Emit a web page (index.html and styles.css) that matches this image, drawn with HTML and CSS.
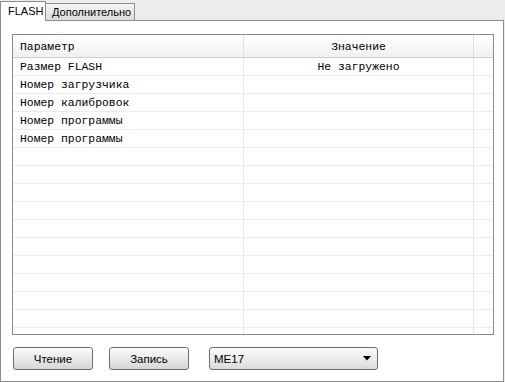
FILE: index.html
```html
<!DOCTYPE html>
<html>
<head>
<meta charset="utf-8">
<title>FLASH</title>
<link rel="stylesheet" href="styles.css">
</head>
<body>
<div class="tabs">
  <div class="tab active">FLASH</div>
  <div class="tab">Дополнительно</div>
</div>
<div class="panel">
  <div class="grid">
    <div class="row head">
      <div class="cell c1">Параметр</div>
      <div class="cell c2">Значение</div>
      <div class="cell c3"></div>
    </div>
    <div class="row"><div class="cell c1">Размер FLASH</div><div class="cell c2">Не загружено</div><div class="cell c3"></div></div>
    <div class="row"><div class="cell c1">Номер загрузчика</div><div class="cell c2"></div><div class="cell c3"></div></div>
    <div class="row"><div class="cell c1">Номер калибровок</div><div class="cell c2"></div><div class="cell c3"></div></div>
    <div class="row"><div class="cell c1">Номер программы</div><div class="cell c2"></div><div class="cell c3"></div></div>
    <div class="row"><div class="cell c1">Номер программы</div><div class="cell c2"></div><div class="cell c3"></div></div>
    <div class="row"><div class="cell c1"></div><div class="cell c2"></div><div class="cell c3"></div></div>
    <div class="row"><div class="cell c1"></div><div class="cell c2"></div><div class="cell c3"></div></div>
    <div class="row"><div class="cell c1"></div><div class="cell c2"></div><div class="cell c3"></div></div>
    <div class="row"><div class="cell c1"></div><div class="cell c2"></div><div class="cell c3"></div></div>
    <div class="row"><div class="cell c1"></div><div class="cell c2"></div><div class="cell c3"></div></div>
    <div class="row"><div class="cell c1"></div><div class="cell c2"></div><div class="cell c3"></div></div>
    <div class="row"><div class="cell c1"></div><div class="cell c2"></div><div class="cell c3"></div></div>
    <div class="row"><div class="cell c1"></div><div class="cell c2"></div><div class="cell c3"></div></div>
    <div class="row"><div class="cell c1"></div><div class="cell c2"></div><div class="cell c3"></div></div>
    <div class="row"><div class="cell c1"></div><div class="cell c2"></div><div class="cell c3"></div></div>
    <div class="row"><div class="cell c1"></div><div class="cell c2"></div><div class="cell c3"></div></div>
  </div>
  <div class="controls">
    <button class="btn">Чтение</button>
    <button class="btn">Запись</button>
    <div class="select">
      <span>ME17</span>
      <svg width="8" height="5" viewBox="0 0 8 5"><path d="M0 0H8L4 4.5Z" fill="#000"/></svg>
    </div>
  </div>
</div>
</body>
</html>
```

FILE: styles.css
```css
* {box-sizing: border-box}

body {
 margin: 0;
 background: #ececec;
 font-family: "Liberation Sans", Tahoma, sans-serif;
 font-size: 11px;
 width: 505px;
 height: 382px;
 overflow: hidden;
}

.tabs {
 display: flex;
 align-items: flex-end;
 height: 20px;
 padding-top: 1px;
}

.tab {
 height: 17px;
 width: 90px;
 padding: 2px 0 0 6px;
 border: 1px solid #8c8c8c;
 border-bottom: none;
 background: linear-gradient(#f4f4f4, #dcdcdc);
 color: #000;
 margin-left: -1px;
 font-size: 11px;
}

.tab.active {
 height: 20px;
 width: 46px;
 padding: 3px 0 0 7px;
 margin-left: 0;
 margin-bottom: -1px;
 background: #fff;
 position: relative;
 z-index: 1;
}

.panel {
 background: #fff;
 border: 1px solid #8c8c8c;
 height: 362px;
 width: 504px;
 padding: 13px 0 0 11px;
}

.grid {
 width: 482px;
 height: 301px;
 border: 1px solid #8a8a8a;
 overflow: hidden;
 font-family: "Liberation Mono", "Courier New", monospace;
 font-size: 11.4px;
 color: #000;
}

.row {
 display: flex;
 height: 18px;
 border-bottom: 1px solid #ececec;
}

.row.head {
 height: 23px;
 background: linear-gradient(#fff, #f0f0f0);
 border-bottom: 1px solid #cfcfcf;
}

.cell {
 border-right: 1px solid #e8e8e8;
 line-height: 19px;
 white-space: nowrap;
}

.head .cell {
 line-height: 24px;
 border-right-color: #e0e0e0;
}

.c1 {
 width: 231px;
 padding-left: 7px;
}

.c2 {
 width: 230px;
 text-align: center;
}

.c3 {
 flex: 1;
 border-right: none;
}

.controls {
 display: flex;
 align-items: center;
 margin-top: 12px;
 padding-left: 1px;
}

.btn {
 width: 80px;
 height: 23px;
 border: 1px solid #6f6f6f;
 border-radius: 3px;
 background: linear-gradient(#fbfbfb, #e6e6e6 60%, #d6d6d6);
 font-family: "Liberation Sans", Tahoma, sans-serif;
 font-size: 11.5px;
 color: #000;
 margin-right: 16px;
 padding: 0;
}

.select {
 display: flex;
 align-items: center;
 justify-content: space-between;
 width: 169px;
 height: 23px;
 margin-left: 4px;
 border: 1px solid #6f6f6f;
 border-radius: 3px;
 background: linear-gradient(#fbfbfb, #e9e9e9 60%, #dadada);
 padding: 0 6px 0 4px;
 font-size: 11.5px;
}
```
